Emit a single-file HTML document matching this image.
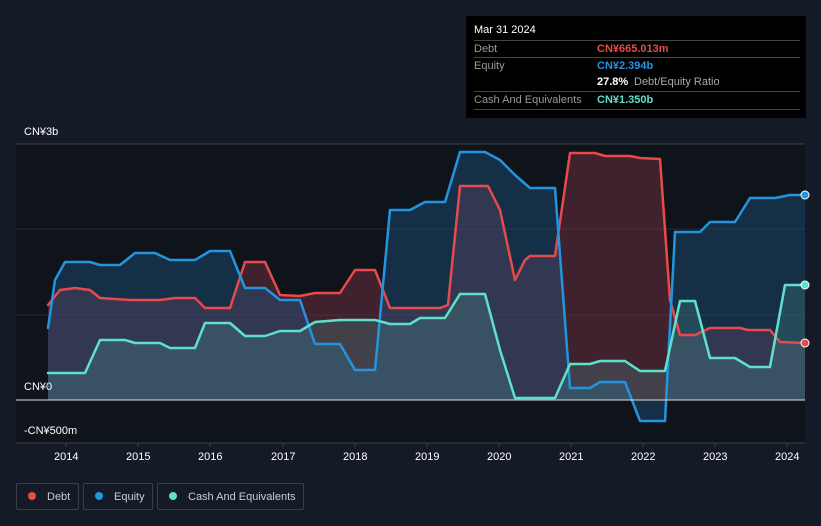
<!DOCTYPE html>
<html><head><style>
body{margin:0;background:#151b26;width:821px;height:526px;overflow:hidden;font-family:"Liberation Sans",Arial,sans-serif;position:relative}
.t{position:absolute;color:#fff;font-size:11px}
.tip{position:absolute;left:466px;top:16px;width:340px;height:102px;background:#000}
.tip .r{position:absolute;left:8px;width:326px;border-top:1px solid #444;font-size:11px;color:#999;height:17px;line-height:17px}
.leg{position:absolute;top:483px;height:27px;border:1px solid #3a404a;border-radius:2px;color:#ccc;font-size:11px;line-height:27px;box-sizing:border-box}
.dot{display:inline-block;width:8px;height:8px;border-radius:50%;margin:0 11px 0 11px;vertical-align:-0px}
</style></head><body>
<svg width="821" height="526" style="position:absolute;left:0;top:0">
<rect x="16" y="144" width="789" height="299" fill="#0f131a"/>
<line x1="16" y1="144" x2="805" y2="144" stroke="#3a404a"/>
<line x1="16" y1="229" x2="805" y2="229" stroke="#262b35"/>
<line x1="16" y1="315" x2="805" y2="315" stroke="#262b35"/>
<line x1="16" y1="443" x2="805" y2="443" stroke="#3a404a"/>
<g stroke="#3a404a"><line x1="66" y1="443" x2="66" y2="447"/><line x1="138" y1="443" x2="138" y2="447"/><line x1="210" y1="443" x2="210" y2="447"/><line x1="283" y1="443" x2="283" y2="447"/><line x1="355" y1="443" x2="355" y2="447"/><line x1="427" y1="443" x2="427" y2="447"/><line x1="499" y1="443" x2="499" y2="447"/><line x1="571" y1="443" x2="571" y2="447"/><line x1="643" y1="443" x2="643" y2="447"/><line x1="715" y1="443" x2="715" y2="447"/><line x1="787" y1="443" x2="787" y2="447"/></g>
<g stroke-linejoin="round" stroke-linecap="round">
<path d="M48,305 L60,290 L75,288 L90,290 L100,298 L130,300 L160,300 L175,298 L195,298 L205,308 L230,308 L245,262 L265,262 L280,295 L300,296 L315,293 L340,293 L355,270 L375,270 L390,308 L440,308 L448,305 L460,186 L488,186 L500,210 L515,280 L525,260 L530,256 L555,256 L570,153 L595,153 L605,156 L630,156 L640,158 L660,159 L670,300 L680,335 L695,335 L710,328 L740,328 L748,330 L770,330 L780,342 L805,343 L805,400 L48,400Z" fill="#6a3040" fill-opacity="0.55"/>
<path d="M48,328 L55,280 L65,262 L90,262 L100,265 L120,265 L135,253 L155,253 L170,260 L195,260 L210,251 L230,251 L245,288 L265,288 L280,300 L300,300 L315,344 L340,344 L355,370 L375,370 L390,210 L410,210 L425,202 L445,202 L460,152 L485,152 L500,160 L515,175 L530,188 L555,188 L570,388 L590,388 L600,382 L625,382 L640,421 L665,421 L675,232 L700,232 L710,222 L735,222 L750,198 L775,198 L790,195 L805,195 L805,400 L48,400Z" fill="#1f5a8a" fill-opacity="0.4"/>
<path d="M48,373 L85,373 L100,340 L125,340 L135,343 L160,343 L170,348 L195,348 L205,323 L230,323 L245,336 L265,336 L280,331 L300,331 L315,322 L340,320 L375,320 L390,324 L410,324 L420,318 L445,318 L460,294 L485,294 L500,350 L515,398 L555,398 L570,364 L590,364 L600,361 L625,361 L640,371 L665,371 L680,301 L695,301 L710,358 L735,358 L750,367 L770,367 L785,285 L805,285 L805,400 L48,400Z" fill="#4a8a8a" fill-opacity="0.3"/>
<path d="M48,305 L60,290 L75,288 L90,290 L100,298 L130,300 L160,300 L175,298 L195,298 L205,308 L230,308 L245,262 L265,262 L280,295 L300,296 L315,293 L340,293 L355,270 L375,270 L390,308 L440,308 L448,305 L460,186 L488,186 L500,210 L515,280 L525,260 L530,256 L555,256 L570,153 L595,153 L605,156 L630,156 L640,158 L660,159 L670,300 L680,335 L695,335 L710,328 L740,328 L748,330 L770,330 L780,342 L805,343" fill="none" stroke="#e84a4a" stroke-width="2.5"/>
<path d="M48,328 L55,280 L65,262 L90,262 L100,265 L120,265 L135,253 L155,253 L170,260 L195,260 L210,251 L230,251 L245,288 L265,288 L280,300 L300,300 L315,344 L340,344 L355,370 L375,370 L390,210 L410,210 L425,202 L445,202 L460,152 L485,152 L500,160 L515,175 L530,188 L555,188 L570,388 L590,388 L600,382 L625,382 L640,421 L665,421 L675,232 L700,232 L710,222 L735,222 L750,198 L775,198 L790,195 L805,195" fill="none" stroke="#2394e0" stroke-width="2.5"/>
<path d="M48,373 L85,373 L100,340 L125,340 L135,343 L160,343 L170,348 L195,348 L205,323 L230,323 L245,336 L265,336 L280,331 L300,331 L315,322 L340,320 L375,320 L390,324 L410,324 L420,318 L445,318 L460,294 L485,294 L500,350 L515,398 L555,398 L570,364 L590,364 L600,361 L625,361 L640,371 L665,371 L680,301 L695,301 L710,358 L735,358 L750,367 L770,367 L785,285 L805,285" fill="none" stroke="#5fe0cc" stroke-width="2.5"/>
</g>
<line x1="16" y1="400" x2="805" y2="400" stroke="#ddd" stroke-width="1"/>
<circle cx="805" cy="195" r="4" fill="#2394e0" stroke="#fff"/>
<circle cx="805" cy="285" r="4" fill="#5fe0cc" stroke="#fff"/>
<circle cx="805" cy="343" r="4" fill="#e84a4a" stroke="#fff"/>
</svg>
<div class="t" style="left:24px;top:126px">CN¥3b</div>
<div class="t" style="left:24px;top:381px">CN¥0</div>
<div class="t" style="left:24px;top:425px">-CN¥500m</div>
<div class="t" style="left:54px;top:451px">2014</div><div class="t" style="left:126px;top:451px">2015</div><div class="t" style="left:198px;top:451px">2016</div><div class="t" style="left:271px;top:451px">2017</div><div class="t" style="left:343px;top:451px">2018</div><div class="t" style="left:415px;top:451px">2019</div><div class="t" style="left:487px;top:451px">2020</div><div class="t" style="left:559px;top:451px">2021</div><div class="t" style="left:631px;top:451px">2022</div><div class="t" style="left:703px;top:451px">2023</div><div class="t" style="left:775px;top:451px">2024</div>
<div class="tip">
<div style="position:absolute;left:8px;top:8px;color:#fff;font-size:11px">Mar 31 2024</div>
<div class="r" style="top:24px">Debt<span style="position:absolute;left:123px;color:#e84a4a;font-weight:bold">CN¥665.013m</span></div>
<div class="r" style="top:41px">Equity<span style="position:absolute;left:123px;color:#2394e0;font-weight:bold">CN¥2.394b</span></div>
<div class="r" style="top:58px;border-top:none"><span style="position:absolute;left:123px;color:#fff;font-weight:bold">27.8%</span><span style="position:absolute;left:160px;color:#aaa">Debt/Equity Ratio</span></div>
<div class="r" style="top:75px">Cash And Equivalents<span style="position:absolute;left:123px;color:#5fe0cc;font-weight:bold">CN¥1.350b</span></div>
<div class="r" style="top:93px;height:0"></div>
</div>
<div class="leg" style="left:16px;width:63px"><span class="dot" style="background:#e84a4a;margin-left:11px"></span>Debt</div>
<div class="leg" style="left:83px;width:70px"><span class="dot" style="background:#2394e0"></span>Equity</div>
<div class="leg" style="left:157px;width:147px"><span class="dot" style="background:#5fe0cc"></span>Cash And Equivalents</div>
</body></html>
